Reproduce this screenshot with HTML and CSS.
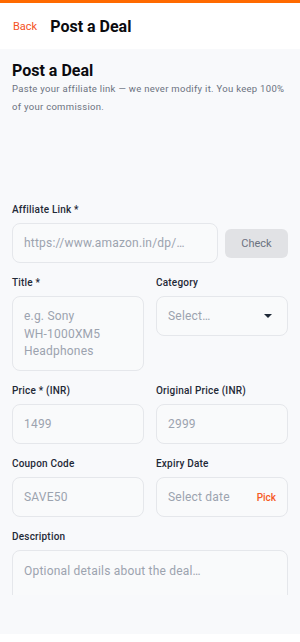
FILE: index.html
```html
<!DOCTYPE html>
<html>
<head>
<meta charset="utf-8">
<link rel="stylesheet" href="styles.css">
</head>
<body>
<div class="screen">
  <div class="topbar"></div>
  <header class="header">
    <span class="back">Back</span>
    <h1 class="header-title">Post a Deal</h1>
  </header>
  <main class="scroll">
    <div class="content">
      <h2 class="heading">Post a Deal</h2>
      <p class="subtitle">Paste your affiliate link — we never modify it. You keep 100% of your commission.</p>

      <div class="field first">
        <label class="label">Affiliate Link *</label>
        <div class="link-row">
          <div class="input grow"><span class="ph">https://www.amazon.in/dp/…</span></div>
          <button class="check">Check</button>
        </div>
      </div>

      <div class="row">
        <div class="field">
          <label class="label">Title *</label>
          <div class="input area"><span class="ph">e.g. Sony <span class="nowrap">WH-1000XM5</span> Headphones</span></div>
        </div>
        <div class="field">
          <label class="label">Category</label>
          <div class="input select"><span class="ph">Select…</span><span class="caret"></span></div>
        </div>
      </div>

      <div class="row">
        <div class="field">
          <label class="label">Price * (INR)</label>
          <div class="input"><span class="ph">1499</span></div>
        </div>
        <div class="field">
          <label class="label">Original Price (INR)</label>
          <div class="input"><span class="ph">2999</span></div>
        </div>
      </div>

      <div class="row">
        <div class="field">
          <label class="label">Coupon Code</label>
          <div class="input"><span class="ph">SAVE50</span></div>
        </div>
        <div class="field">
          <label class="label">Expiry Date</label>
          <div class="input select"><span class="ph">Select date</span><span class="pick">Pick</span></div>
        </div>
      </div>

      <div class="field">
        <label class="label">Description</label>
        <div class="input desc"><span class="ph">Optional details about the deal…</span></div>
      </div>
    </div>
  </main>
  <div class="bottom-space"></div>
</div>
</body>
</html>
```

FILE: styles.css
```css
* { box-sizing: border-box; }
html, body { margin: 0; padding: 0; background: #ffffff; }
body { font-family: Roboto, "Noto Sans", Arial, sans-serif; color: #111827; }
.screen { width: 300px; height: 642px; display: flex; flex-direction: column; overflow: hidden; }
.topbar { height: 3px; background: #ff6a00; flex: none; }
.header { height: 46px; flex: none; background: #ffffff; display: flex; align-items: center; padding-left: 13px; gap: 13px; }
.back { font-size: 11px; color: #f4511e; }
.header-title { margin: 0; font-size: 16px; font-weight: 700; color: #0b0b0f; }
.scroll { height: 546px; flex: none; overflow: hidden; background: #f8f9fb; }
.bottom-space { height: 39px; flex: none; background: #f8f9fb; }
.content { padding: 11px 12px 0; display: flex; flex-direction: column; gap: 13px; }
.heading { margin: 0; font-size: 16px; font-weight: 700; line-height: 22px; color: #0b0b0f; }
.subtitle { margin: -15px 0 0; font-size: 9.5px; line-height: 18px; color: #6b7280; letter-spacing: 0.3px; }
.field { display: flex; flex-direction: column; gap: 6px; min-width: 0; }
.field.first { margin-top: 74px; }
.label { font-size: 10px; font-weight: 500; line-height: 14px; color: #1f2937; letter-spacing: 0.2px; }
.row { display: grid; grid-template-columns: 1fr 1fr; gap: 12px; align-items: start; }
.link-row { display: flex; align-items: center; gap: 7px; }
.grow { flex: 1; min-width: 0; }
.input { height: 40px; border: 1px solid #e5e7eb; border-radius: 8px; background: #f9fafb; display: flex; align-items: center; padding: 0 11px; }
.ph { font-size: 12px; color: #9ca3af; letter-spacing: 0.2px; white-space: nowrap; overflow: hidden; }
.nowrap { white-space: nowrap; }
.area { height: 75px; align-items: flex-start; padding-top: 11px; }
.area .ph { white-space: normal; line-height: 17.5px; }
.desc { height: 60px; align-items: flex-start; padding-top: 11px; }
.desc .ph { line-height: 18px; }
.check { width: 63px; height: 29px; flex: none; border: 0; border-radius: 6px; background: #e1e2e5; color: #6b7280; font-family: inherit; font-size: 11px; padding: 0; }
.select { justify-content: space-between; }
.caret { width: 0; height: 0; border-left: 4px solid transparent; border-right: 4px solid transparent; border-top: 4px solid #1f2937; margin-right: 4px; }
.pick { font-size: 10px; font-weight: 500; color: #f65a24; }
```
